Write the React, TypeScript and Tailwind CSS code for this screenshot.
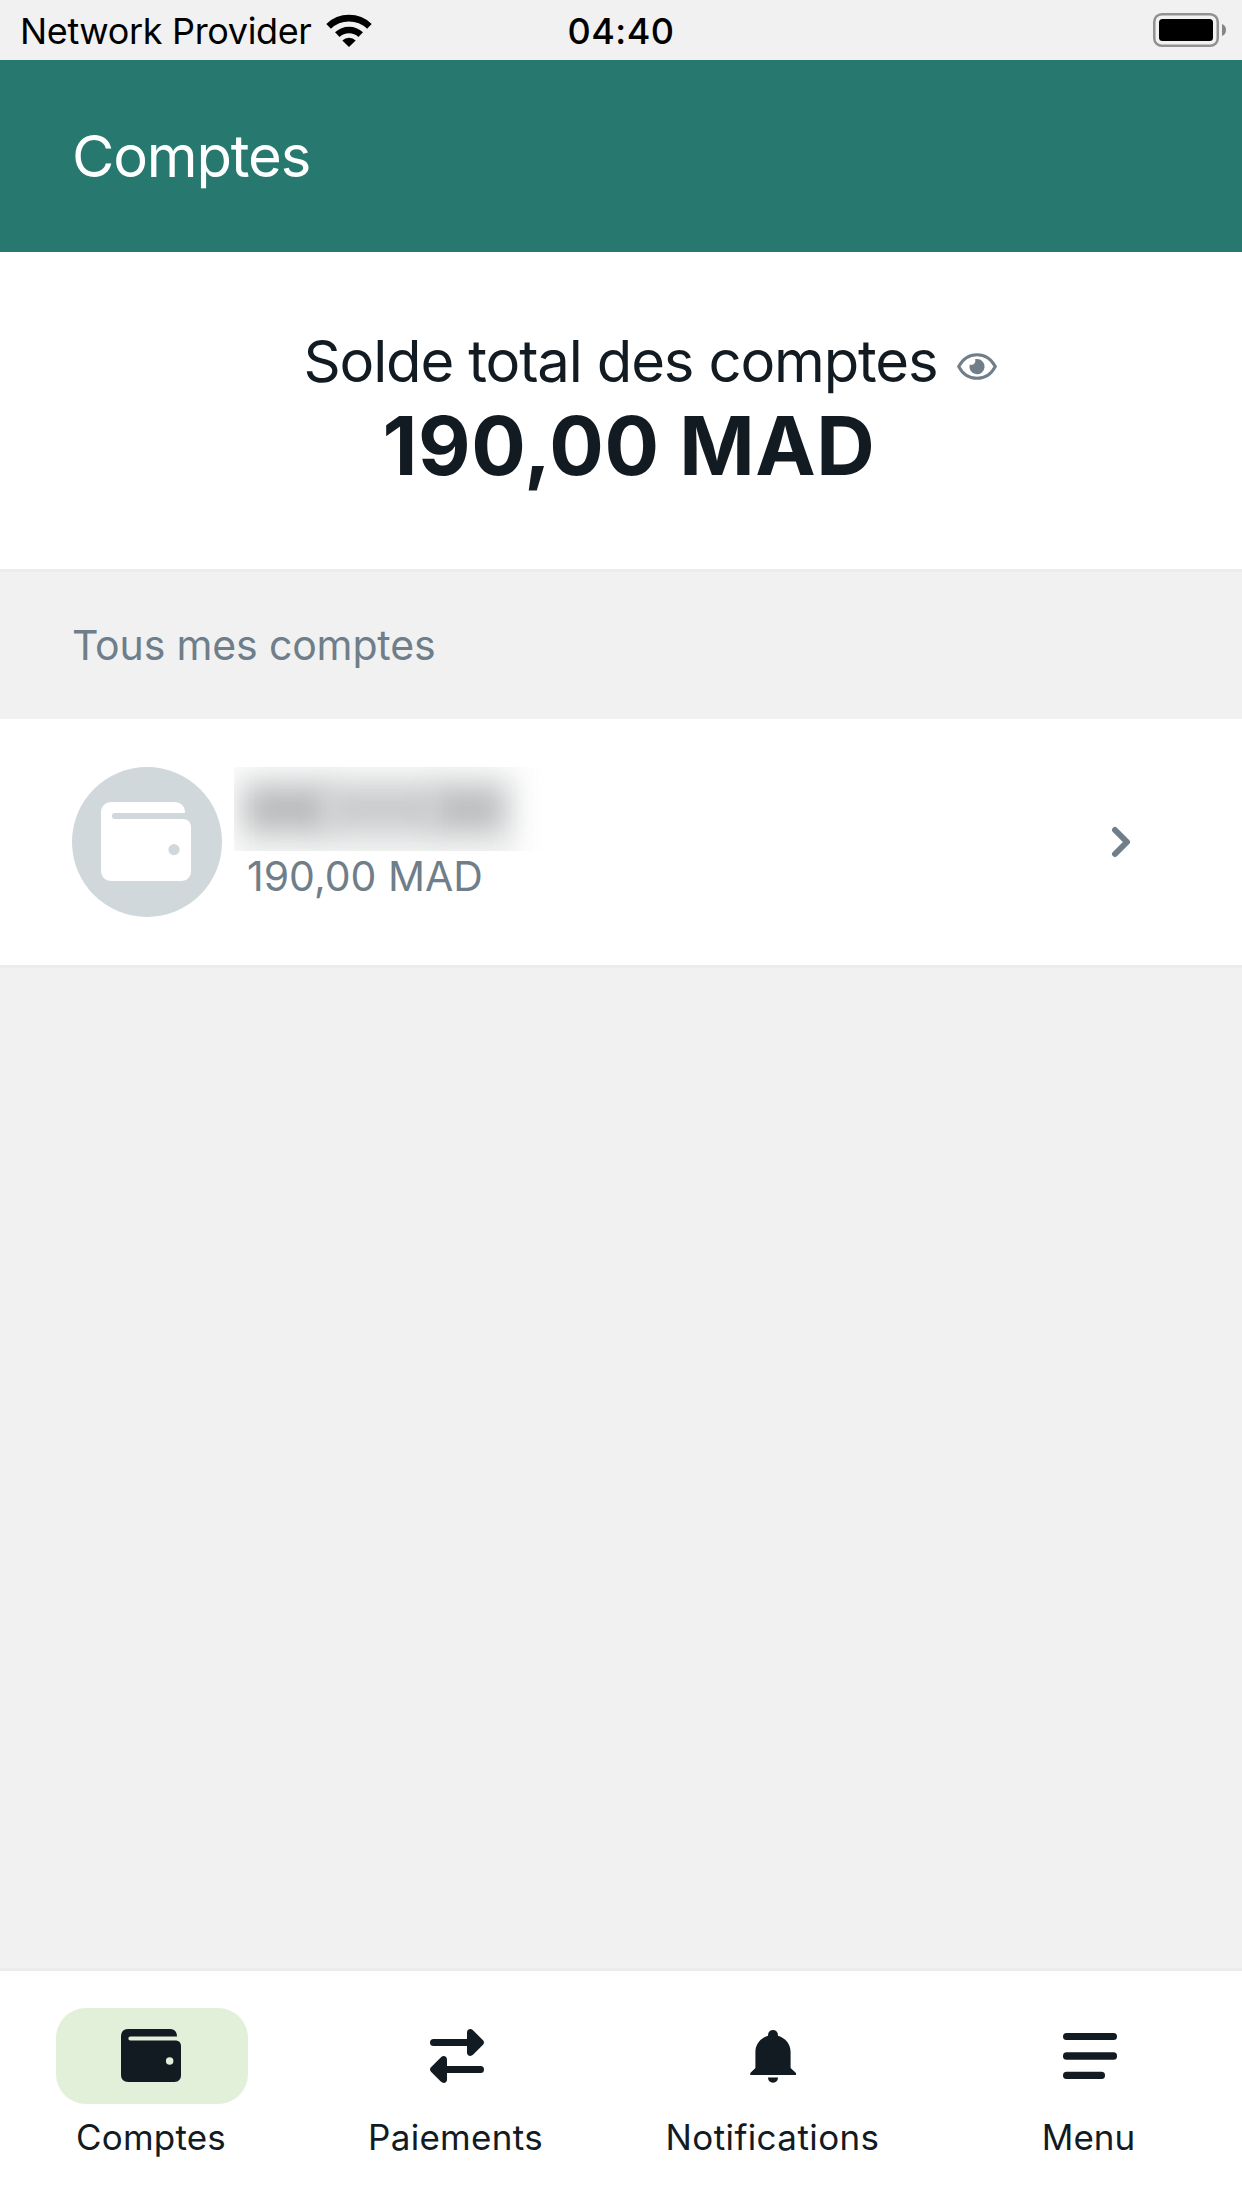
import type { ReactNode } from "react";

interface NavItem {
  label: string;
  icon: ReactNode;
  active?: boolean;
  width: string;
  tracking: string;
}

const WALLET_PATH =
  "M11 0H73C80 0 84 4 84 11H14A3 3 0 0 0 14 17H81C87 17 90 20 90 26V69C90 75 86 79 80 79H11C4 79 0 75 0 68V11C0 4 4 0 11 0ZM73 42A5.6 5.6 0 1 0 73 53.2A5.6 5.6 0 1 0 73 42Z";

function WalletIcon({ className }: { className: string }) {
  return (
    <svg viewBox="0 0 90 79" preserveAspectRatio="none" className={className} fill="currentColor">
      <path fillRule="evenodd" d={WALLET_PATH} />
    </svg>
  );
}

function TransferIcon() {
  return (
    <svg viewBox="0 0 54 54" className="h-[54px] w-[54px]" fill="currentColor">
      <rect x="0" y="10" width="44" height="7" rx="3.5" />
      <path d="M37 3.5C37 .2 40.5 -1 43 1.2L53 11.3Q55 13.5 53 15.7L43 25.8C40.5 28 37 26.8 37 23.5Z" />
      <rect x="10" y="37" width="44" height="7" rx="3.5" />
      <path d="M17 30.5C17 27.2 13.5 26 11 28.2L1 38.3Q-1 40.5 1 42.7L11 52.8C13.5 55 17 53.8 17 50.5Z" />
    </svg>
  );
}

function BellIcon() {
  return (
    <svg viewBox="0 0 46 54" className="mr-px h-[54px] w-[46px]" fill="currentColor">
      <path d="M23 1C26 1 28 3 28 6.7C35.5 9 40.6 15 40.6 23V39L46 44V46H.3V44L5.4 39V23C5.4 15 10.5 9 18 6.7C18 3 20 1 23 1Z" />
      <path d="M18 48.5H28C28 51.5 26 53.7 23 53.7S18 51.5 18 48.5Z" />
    </svg>
  );
}

function MenuIcon() {
  return (
    <svg viewBox="0 0 54 46" className="h-[46px] w-[54px]" fill="currentColor">
      <rect x="0" y="0" width="54" height="7" rx="3.5" />
      <rect x="0" y="19.3" width="54" height="7.4" rx="3.5" />
      <rect x="0" y="38.8" width="42" height="7.2" rx="3.5" />
    </svg>
  );
}

const NAV_ITEMS: NavItem[] = [
  { label: "Comptes", icon: <WalletIcon className="mr-0.5 mb-px h-[53px] w-[60px]" />, active: true, width: "w-[304px]", tracking: "tracking-[0.2px]" },
  { label: "Paiements", icon: <TransferIcon />, width: "w-[305px]", tracking: "tracking-[0.3px]" },
  { label: "Notifications", icon: <BellIcon />, width: "w-[329px]", tracking: "tracking-[0.4px]" },
  { label: "Menu", icon: <MenuIcon />, width: "w-[303px]", tracking: "tracking-normal" },
];

function StatusBar() {
  return (
    <div className="grid h-[60px] grid-cols-3 items-center bg-[#f1f1f1] text-black">
      <div className="flex items-center pl-5">
        <span className="pt-px text-[36px] leading-[60px] tracking-[-0.35px] whitespace-nowrap">Network Provider</span>
        <svg viewBox="0 0 46 33" className="ml-[14px] h-[33px] w-[46px] shrink-0" fill="none" stroke="currentColor" strokeWidth="6.6">
          <path d="M2.6 12.3A29.5 29.5 0 0 1 43.4 12.3" />
          <path d="M11.3 20.6A17 17 0 0 1 34.7 20.6" />
          <path d="M16.3 26.4A9.6 9.6 0 0 1 29.7 26.4L23 33Z" fill="currentColor" stroke="none" />
        </svg>
      </div>
      <span className="pt-px text-center text-[36px] leading-[60px] font-medium tracking-[0.5px]">04:40</span>
      <svg viewBox="0 0 74 34" className="mr-[15px] mb-px h-[34px] w-[74px] justify-self-end">
        <rect x="1.25" y="1.25" width="63.5" height="31.5" rx="7.5" fill="none" stroke="#919191" strokeWidth="2.5" />
        <rect x="6" y="6" width="54" height="22" rx="3.5" />
        <path d="M69 11Q73 12.5 73 17T69 23Z" fill="#858585" />
      </svg>
    </div>
  );
}

export default function App() {
  return (
    <div className="flex h-[2208px] w-[1242px] flex-col overflow-hidden bg-[#f1f1f1] font-['Inter',sans-serif] text-[#131b22]">
      <StatusBar />

      <header className="flex h-48 items-center bg-[#277970] pl-[72px]">
        <h1 className="text-[58px] leading-[70px] tracking-[-1.15px] text-white">Comptes</h1>
      </header>

      <section className="flex h-80 flex-col items-center border-b-3 border-[#ececec] bg-white pt-[73px]">
        <div className="flex items-center pl-[59px]">
          <span className="text-[58px] leading-[72px] tracking-[-1.15px]">Solde total des comptes</span>
          <svg viewBox="0 0 40 27" className="mt-2.5 ml-[20px] h-[27px] w-10 text-[#6f7e89]" fill="currentColor">
            <path d="M1.7 13.5C10 -2.3 30 -2.3 38.3 13.5C30 29.3 10 29.3 1.7 13.5Z" fill="none" stroke="currentColor" strokeWidth="3" />
            <path d="M20 6A7.6 7.6 0 1 1 12.7 11.6C15.5 13 19.5 10.5 18 6.3Z" />
          </svg>
        </div>
        <strong className="mt-px pl-4 text-[81px] leading-[96px] font-bold tracking-[0.55px]">190,00 MAD</strong>
      </section>

      <h2 className="h-[147px] pl-[72px] text-[41px] leading-[147px] tracking-[-0.15px] text-[#6f7e89]">Tous mes comptes</h2>

      <button type="button" className="flex h-[249px] items-center border-b-3 border-[#ececec] bg-white pl-[72px] text-left">
        <span className="flex size-[150px] items-center justify-center rounded-full bg-[#d0d8db] pr-0.5 pb-px text-white">
          <WalletIcon className="h-[79px] w-[90px]" />
        </span>
        <span className="mt-12 ml-3 flex flex-col self-start">
          {/* account name is masked */}
          <span className="flex h-[84px] w-[320px] overflow-hidden">
            <span className="-mr-[289px] h-24 w-[285px] shrink-0 bg-[#eff0f0] blur-[14px]" />
            <span className="mt-5 ml-4 h-11 w-[84px] shrink-0 bg-[#b9babc] blur-[14px]" />
            <span className="-ml-1 mt-5 h-11 w-[112px] shrink-0 bg-[#c9cacc] blur-[14px]" />
            <span className="-ml-1 mt-5 h-11 w-[70px] shrink-0 bg-[#bbbcbe] blur-[14px]" />
          </span>
          <span className="pl-[13px] text-[41px] leading-[51px] tracking-normal text-[#6f7e89]">190,00 MAD</span>
        </span>
        <svg viewBox="0 0 20 32" className="mr-[111px] ml-auto h-8 w-5 text-[#6f7e89]" fill="none" stroke="currentColor" strokeWidth="6" strokeLinecap="round" strokeLinejoin="round">
          <path d="M4 4L16 16L4 28" />
        </svg>
      </button>

      <nav className="mt-auto flex h-[240px] border-t-3 border-[#ebebeb] bg-white pt-[37px]">
        {NAV_ITEMS.map((item) => (
          <a key={item.label} className={`flex shrink-0 flex-col items-center ${item.width}`}>
            <span className={`flex h-24 w-48 items-center justify-center ${item.active ? "rounded-[30px] bg-[#e2efd9]" : ""}`}>
              {item.icon}
            </span>
            <span className={`mt-2.5 pr-0.5 text-[35px] leading-[46px] ${item.tracking}`}>{item.label}</span>
          </a>
        ))}
      </nav>
    </div>
  );
}
